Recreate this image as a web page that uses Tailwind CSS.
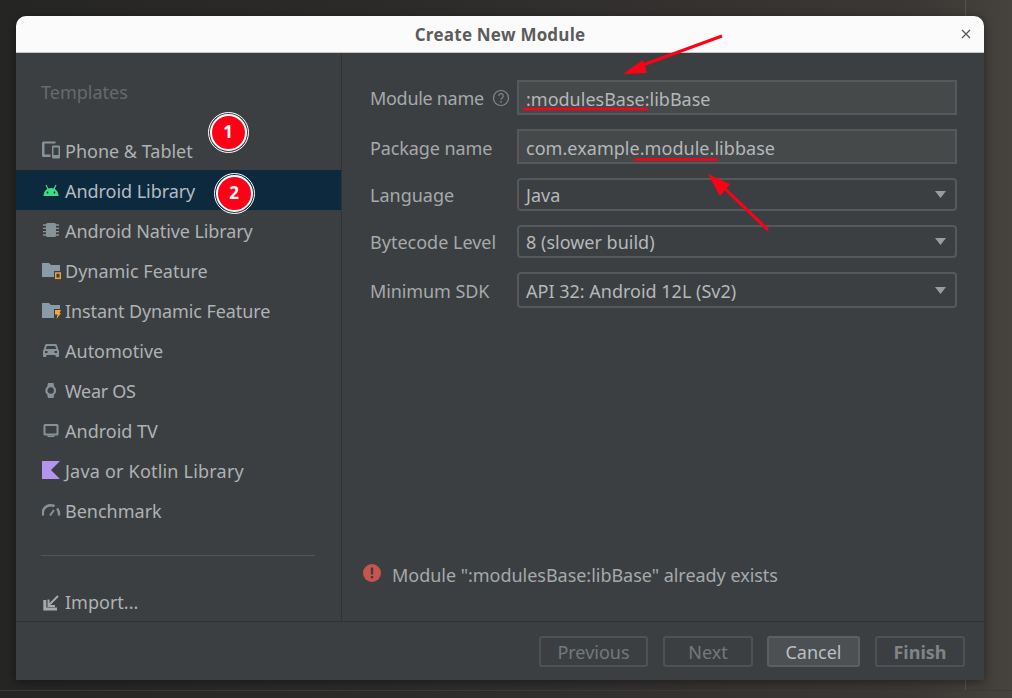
<!DOCTYPE html>
<html lang="en">
<head>
  <meta charset="UTF-8" />
  <title>Create New Module</title>
  <script src="https://cdn.jsdelivr.net/npm/@tailwindcss/browser@4"></script>
</head>
<body class="bg-[#2b2a29] overflow-hidden">
  <div class="relative w-[1012px] h-[698px] pt-4 pl-4 bg-[linear-gradient(90deg,#252524_0%,#2d2b2a_40%,#3a3734_90%,#46423e_100%)] font-['Noto_Sans',sans-serif]">
    <!-- window edges behind the dialog -->
    <div class="absolute left-[965px] top-0 w-px h-4 bg-[#55524f]"></div>
    <div class="absolute left-[965px] top-[680px] w-px h-[10px] bg-[#55524f]"></div>
    <div class="absolute left-0 top-[690px] w-full h-px bg-[#3c3a39]"></div>

    <!-- dialog -->
    <div class="relative w-[968px] h-[664px] flex flex-col rounded-t-[10px] bg-[#3c3f41] overflow-hidden shadow-[0_2px_10px_rgba(0,0,0,0.4)]">
      <!-- title bar -->
      <div class="relative h-[37px] shrink-0 flex items-center justify-center bg-[#fbfbfb] border-b border-[#c8c8c8]">
        <span class="mt-[2px] text-[17px] font-bold text-[#5c5c5c] font-['Open_Sans',sans-serif] tracking-[0.2px]">Create New Module</span>
        <svg class="absolute right-[13px] top-[13px] w-[10px] h-[10px]" viewBox="0 0 10 10" fill="none" stroke="#555" stroke-width="1.2"><path d="M1 1l8 8M9 1l-8 8"/></svg>
      </div>

      <div class="flex h-[569px] shrink-0 border-b border-[#323232]">
        <!-- templates list -->
        <div class="w-[326px] shrink-0 border-r border-[#323232] flex flex-col">
          <div class="pl-[25px] pt-[26px] h-[77px] shrink-0 text-[18px] leading-[27px] text-[#666a6c]">Templates</div>

          <div class="h-10 shrink-0 flex items-center pl-[26px] text-[18px] text-[#aeb2b4]">
            <svg class="w-[19px] h-5 mr-[4px] shrink-0" viewBox="0 0 19 20" fill="#87939a"><path d="M1.500 1.500h12v2H2.500v11h6v2.500h-7A1.500 1.500 0 0 1 0 15.500V3a1.500 1.500 0 0 1 1.500-1.500z"/><path fill-rule="evenodd" d="M11 5.500h6a1 1 0 0 1 1 1V17.500a1 1 0 0 1-1 1h-6a1 1 0 0 1-1-1V6.500a1 1 0 0 1 1-1zm.5 2v7.500h5V7.500z"/></svg>
            <span class="mt-[2px]">Phone &amp; Tablet</span>
          </div>
          <div class="h-10 shrink-0 flex items-center pl-[26px] text-[18px] text-[#b4bcc2] bg-[#0d293e]">
            <svg class="w-[19px] h-5 mr-[4px] shrink-0" viewBox="0 0 19 20" fill="#3ddc84"><path d="M1.500 16C1.500 11 5 8 9 8s7.500 3 7.500 8z"/><path d="M4 5l2 4M14 5l-2 4" stroke="#3ddc84" stroke-width="1.200"/><circle cx="5.500" cy="12.500" r=".9" fill="#0d293e"/><circle cx="12.500" cy="12.500" r=".9" fill="#0d293e"/></svg>
            <span class="mt-[2px] tracking-[-0.05px]">Android Library</span>
          </div>
          <div class="h-10 shrink-0 flex items-center pl-[26px] text-[18px] text-[#aeb2b4]">
            <svg class="w-[19px] h-5 mr-[4px] shrink-0" viewBox="0 0 19 20" fill="#87939a"><rect x="4" y="3" width="10" height="14" rx="1.500"/><path d="M1 5h16M1 8.300h16M1 11.700h16M1 15h16" stroke="#87939a" stroke-width="1.300"/></svg>
            <span class="mt-[2px] tracking-[-0.1px]">Android Native Library</span>
          </div>
          <div class="h-10 shrink-0 flex items-center pl-[26px] text-[18px] text-[#aeb2b4]">
            <svg class="w-[19px] h-5 mr-[4px] shrink-0" viewBox="0 0 19 20"><path fill="#8a9ba8" d="M0 3h7l2 2h9v6h-6v6H0z"/><rect x="13.700" y="13" width="4.600" height="5.300" fill="none" stroke="#e8a33d" stroke-width="1.500"/></svg>
            <span class="mt-[2px]">Dynamic Feature</span>
          </div>
          <div class="h-10 shrink-0 flex items-center pl-[26px] text-[18px] text-[#aeb2b4]">
            <svg class="w-[19px] h-5 mr-[4px] shrink-0" viewBox="0 0 19 20"><path fill="#8a9ba8" d="M0 3h7l2 2h9v4h-6v9H0z"/><path fill="#f2a83b" d="M13 10h6l-1.500 3h1.500l-4.500 6 1-4.500h-2.500z"/></svg>
            <span class="mt-[2px] tracking-[-0.1px]">Instant Dynamic Feature</span>
          </div>
          <div class="h-10 shrink-0 flex items-center pl-[26px] text-[18px] text-[#aeb2b4]">
            <svg class="w-[19px] h-5 mr-[4px] shrink-0" viewBox="0 0 19 20" fill="#87939a"><path fill-rule="evenodd" d="M4.500 4h9a1.500 1.500 0 0 1 1.400 1L16.300 9.500a2 2 0 0 1 .7 1.500v5a1 1 0 0 1-1 1h-1.500a1 1 0 0 1-1-1v-1h-9v1a1 1 0 0 1-1 1H2a1 1 0 0 1-1-1v-5a2 2 0 0 1 .7-1.500L3.100 5A1.500 1.500 0 0 1 4.500 4zm.300 2L3.800 9h10.400l-1-3zM3 11v2h2.500v-2zm9.500 0v2H15v-2z"/></svg>
            <span class="mt-[2px]">Automotive</span>
          </div>
          <div class="h-10 shrink-0 flex items-center pl-[26px] text-[18px] text-[#aeb2b4]">
            <svg class="w-[19px] h-5 mr-[4px] shrink-0" viewBox="0 0 19 20" fill="none"><path fill="#87939a" d="M6 3h5.500l.7 3H5.300zM6 18h5.500l.7-3H5.300z"/><circle cx="8.700" cy="10.500" r="4.300" stroke="#87939a" stroke-width="2.200"/></svg>
            <span class="mt-[2px] tracking-[-0.3px]">Wear OS</span>
          </div>
          <div class="h-10 shrink-0 flex items-center pl-[26px] text-[18px] text-[#aeb2b4]">
            <svg class="w-[19px] h-5 mr-[4px] shrink-0" viewBox="0 0 19 20" fill="none"><rect x="2.500" y="5" width="13" height="9.500" rx=".5" stroke="#87939a" stroke-width="2"/><path d="M5.500 16.300h7" stroke="#87939a" stroke-width="1.500"/></svg>
            <span class="mt-[2px]">Android TV</span>
          </div>
          <div class="h-10 shrink-0 flex items-center pl-[26px] text-[18px] text-[#aeb2b4]">
            <svg class="w-[19px] h-5 mr-[4px] shrink-0" viewBox="0 0 19 20" fill="#b594ef"><path d="M0 1h18L9 10l9 9H0z"/></svg>
            <span class="mt-[2px] tracking-[0.2px]">Java or Kotlin Library</span>
          </div>
          <div class="h-10 shrink-0 flex items-center pl-[26px] text-[18px] text-[#aeb2b4]">
            <svg class="w-[19px] h-5 mr-[4px] shrink-0" viewBox="0 0 19 20" fill="none" stroke="#87939a" stroke-width="2.400"><path d="M1.200 15.500A7.800 7.800 0 0 1 9 5.200c1.500 0 2.500.3 3.500.9M15 8.500a8 8 0 0 1 1.800 7"/><path d="M8 15.500l4-5.500" stroke-width="2"/></svg>
            <span class="mt-[2px]">Benchmark</span>
          </div>

          <div class="ml-[25px] mt-[25px] w-[274px] h-px shrink-0 bg-[#515658]"></div>
          <div class="h-[39px] shrink-0 mt-[27px] flex items-center pl-[26px] text-[18px] text-[#aeb2b4]">
            <svg class="w-[19px] h-5 mr-[4px] shrink-0" viewBox="0 0 19 20" fill="none" stroke="#a8a8a8"><path d="M2.800 7v9h12.200" stroke-width="3"/><path d="M16 3l-9 9" stroke-width="2"/><path d="M6.500 6.500v6.500h6.500" stroke-width="2"/></svg>
            <span>Import...</span>
          </div>
        </div>

        <!-- form -->
        <div class="flex-1 flex flex-col pl-[28px] pr-[27px] pt-[27px]">
          <div class="flex items-center h-[35px] mb-[14px]">
            <div class="w-[147px] shrink-0 flex items-center text-[18px] text-[#a5a9ab]">
              <span class="mt-[2px] tracking-[-0.3px]">Module name</span>
              <svg class="w-[18px] h-[18px] ml-[8px]" viewBox="0 0 18 18" fill="none"><circle cx="9" cy="9" r="7.500" stroke="#83888b" stroke-width="1.200"/><path d="M6.700 7a2.300 2.300 0 1 1 3.400 2c-.8.500-1.100.9-1.100 1.800" stroke="#83888b" stroke-width="1.200"/><circle cx="9" cy="12.800" r=".9" fill="#83888b"/></svg>
            </div>
            <div class="flex-1 h-[35px] flex items-center px-[7px] border-2 border-[#56595b] bg-[#45494a] text-[18px] text-[#b4b8ba]"><span class="mt-[3px]">:modulesBase:libBase</span></div>
          </div>
          <div class="flex items-center h-[35px] mb-[14px]">
            <div class="w-[147px] shrink-0 text-[18px] text-[#a5a9ab]"><span class="block mt-[3px] tracking-[-0.1px]">Package name</span></div>
            <div class="flex-1 h-[35px] flex items-center px-[7px] border-2 border-[#56595b] bg-[#45494a] text-[18px] text-[#b4b8ba]"><span class="mt-[3px] tracking-[0.04px]">com.example.module.libbase</span></div>
          </div>
          <div class="flex items-center h-[33px] mb-[14px]">
            <div class="w-[147px] shrink-0 text-[18px] text-[#a5a9ab]"><span class="block mt-[2px]">Language</span></div>
            <div class="flex-1 h-[33px] flex items-center justify-between pl-[7px] pr-[9px] border-2 border-[#56595b] rounded-[4px] bg-[#3c3f41] text-[18px] text-[#b4b8ba]"><span class="mt-[2px]">Java</span>
              <svg class="w-[11px] h-[7px]" viewBox="0 0 11 7" fill="#9a9da0"><path d="M0 0h11L5.500 7z"/></svg>
            </div>
          </div>
          <div class="flex items-center h-[33px] mb-[14px]">
            <div class="w-[147px] shrink-0 text-[18px] text-[#a5a9ab]"><span class="block mt-[2px]">Bytecode Level</span></div>
            <div class="flex-1 h-[33px] flex items-center justify-between pl-[7px] pr-[9px] border-2 border-[#56595b] rounded-[4px] bg-[#3c3f41] text-[18px] text-[#b4b8ba]"><span class="mt-[2px]">8 (slower build)</span>
              <svg class="w-[11px] h-[7px]" viewBox="0 0 11 7" fill="#9a9da0"><path d="M0 0h11L5.500 7z"/></svg>
            </div>
          </div>
          <div class="flex items-center h-[36px]">
            <div class="w-[147px] shrink-0 text-[18px] text-[#a5a9ab]"><span class="block mt-[2px] tracking-[-0.1px]">Minimum SDK</span></div>
            <div class="flex-1 h-[36px] flex items-center justify-between pl-[7px] pr-[9px] border-2 border-[#56595b] rounded-[4px] bg-[#3c3f41] text-[18px] text-[#b4b8ba]"><span class="mt-[2px]">API 32: Android 12L (Sv2)</span>
              <svg class="w-[11px] h-[7px]" viewBox="0 0 11 7" fill="#9a9da0"><path d="M0 0h11L5.500 7z"/></svg>
            </div>
          </div>

          <div class="mt-auto mb-[32px] -ml-[7px] flex items-center text-[18px] text-[#a5a9ab]">
            <svg class="w-[18px] h-[18px] mr-[11px] -mt-[6px] shrink-0" viewBox="0 0 18 18"><circle cx="9" cy="9" r="9" fill="#c75450"/><rect x="7.800" y="3.500" width="2.400" height="7" fill="#3c3f41"/><rect x="7.800" y="12" width="2.400" height="2.400" fill="#3c3f41"/></svg>
            <span class="tracking-[-0.03px]">Module ":modulesBase:libBase" already exists</span>
          </div>
        </div>
      </div>

      <!-- footer -->
      <div class="flex-1 flex items-center justify-end gap-[15px] pr-[19px] pt-[1px] text-[18px]">
        <div class="w-[109px] h-[31px] flex items-center justify-center rounded-[3px] border-2 border-[#4f5254] text-[#74787a]"><span class="mt-[1px]">Previous</span></div>
        <div class="w-[90px] h-[31px] flex items-center justify-center rounded-[3px] border-2 border-[#4f5254] text-[#74787a]"><span class="mt-[1px]">Next</span></div>
        <div class="w-[93px] h-[31px] -ml-px flex items-center justify-center rounded-[3px] border-2 border-[#5b5f61] bg-[#4c5052] text-[#bbbfc1]"><span class="mt-[1px]">Cancel</span></div>
        <div class="w-[90px] h-[31px] flex items-center justify-center rounded-[3px] border-2 border-[#4f5254] text-[#808486] font-bold"><span class="mt-[1px]">Finish</span></div>
      </div>
    </div>

    <!-- annotations drawn over the screenshot -->
    <svg class="absolute left-0 top-0 w-[1012px] h-[698px] pointer-events-none" viewBox="0 0 1012 698" fill="none">
      <path d="M523 109H648M634 159.500H718" stroke="#ff0017" stroke-width="2.500"/>
      <path d="M722 36L640 66M768 230L722 186" stroke="#ff0017" stroke-width="3"/>
      <path d="M623 74L643 60L647 73Z" fill="#ff0017"/>
      <path d="M708 174L730 184L720 196Z" fill="#ff0017"/>
    </svg>
    <div class="absolute left-[209.500px] top-[113.500px] w-[37px] h-[37px] flex items-center justify-center rounded-full bg-[#ff0017] border-2 border-white outline outline-1 outline-offset-1 outline-white text-white text-[17px] font-bold">1</div>
    <div class="absolute left-[215.500px] top-[174.500px] w-[37px] h-[37px] flex items-center justify-center rounded-full bg-[#ff0017] border-2 border-white outline outline-1 outline-offset-1 outline-white text-white text-[17px] font-bold">2</div>
  </div>
</body>
</html>
